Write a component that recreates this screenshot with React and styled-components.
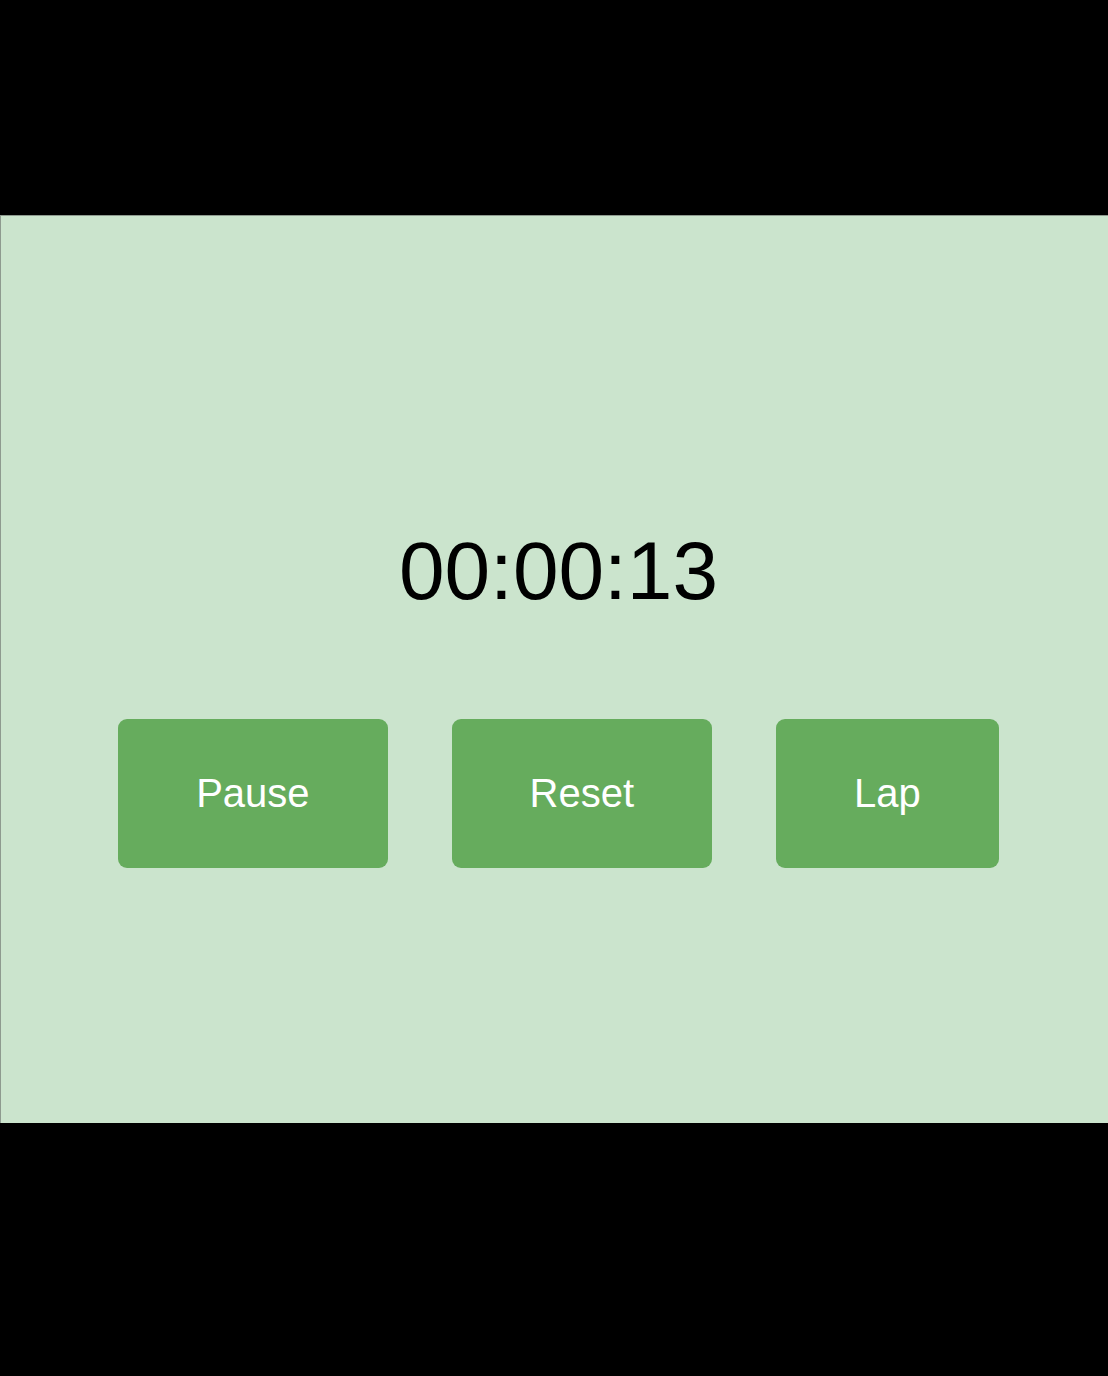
import styled, { createGlobalStyle } from "styled-components";

const GlobalStyle = createGlobalStyle`
  html, body {
    margin: 0;
    padding: 0;
    background: #000000;
    overflow: hidden;
  }
  body {
    font-family: "Liberation Sans", Arial, sans-serif;
  }
`;

const Screen = styled.div`
  width: 1108px;
  height: 1376px;
  padding-top: 215px;
  box-sizing: border-box;
  background: #000000;
  overflow: hidden;
`;

const Panel = styled.div`
  width: 1116px;
  height: 908px;
  box-sizing: border-box;
  background-color: #cbe4cd;
  border-top: 1px solid #8e9a8f;
  border-left: 1px solid #8e9a8f;
  padding-top: 308px;
  display: flex;
  flex-direction: column;
  align-items: center;
  gap: 101px;
`;

const Time = styled.div`
  font-size: 82px;
  color: #000000;
  line-height: normal;
`;

const ButtonRow = styled.div`
  display: flex;
  gap: 64px;
`;

const Button = styled.button`
  font-family: "Liberation Sans", Arial, sans-serif;
  font-size: 40px;
  line-height: 46px;
  color: #ffffff;
  background-color: #66ac5d;
  border: none;
  border-radius: 9px;
  padding: 51px 78px 52px;
  cursor: pointer;
`;

const App = () => {
  return (
    <Screen>
      <GlobalStyle />
      <Panel>
        <Time>00:00:13</Time>
        <ButtonRow>
          <Button>Pause</Button>
          <Button>Reset</Button>
          <Button>Lap</Button>
        </ButtonRow>
      </Panel>
    </Screen>
  );
};

export default App;
